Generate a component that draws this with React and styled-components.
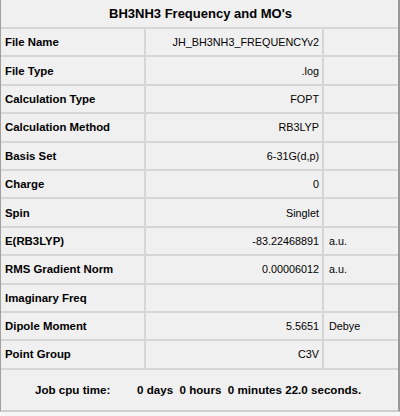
import React from 'react'
import styled, { createGlobalStyle } from 'styled-components'

const GlobalStyle = createGlobalStyle`
  html, body {
    margin: 0;
    padding: 0;
    background: #f6f6f6;
  }
  body {
    font-family: "Liberation Sans", Arial, sans-serif;
    font-size: 11px;
    color: #000;
  }
`

const Panel = styled.div`
  width: 400px;
  box-sizing: border-box;
  background: #f0f0f0;
  border-left: 1px solid #a0a0a0;
  border-right: 2px solid #979797;
  border-bottom: 2px solid #cfcfcf;
`

const Header = styled.div`
  height: 27px;
  display: flex;
  align-items: center;
  justify-content: center;
  font-weight: bold;
  font-size: 13px;
  padding-left: 2px;
`

const Row = styled.div`
  display: grid;
  grid-template-columns: 145px 178px 1fr;
  height: 28.4px;
  box-sizing: border-box;
  border-top: 2px solid #d6d6d6;
`

const Cell = styled.div`
  display: flex;
  align-items: center;
  box-sizing: border-box;
  border-right: ${p => (p.last ? 'none' : '2px solid #d6d6d6')};
  justify-content: ${p => (p.right ? 'flex-end' : 'flex-start')};
  padding: ${p => (p.right ? '0 3px 0 0' : p.unit ? '0 0 0 5px' : '0 0 0 4px')};
  font-weight: ${p => (p.bold ? 'bold' : 'normal')};
  font-size: ${p => (p.bold ? '11.4px' : '10.8px')};
  white-space: nowrap;
`

const JobRow = styled.div`
  height: 40px;
  border-top: 2px solid #d6d6d6;
  display: flex;
  align-items: center;
  font-weight: bold;
  font-size: 11.6px;
  padding-left: 34px;
  white-space: pre;
`

const JobLabel = styled.span`
  width: 102px;
`

const rows = [
  ['File Name', 'JH_BH3NH3_FREQUENCYv2', ''],
  ['File Type', '.log', ''],
  ['Calculation Type', 'FOPT', ''],
  ['Calculation Method', 'RB3LYP', ''],
  ['Basis Set', '6-31G(d,p)', ''],
  ['Charge', '0', ''],
  ['Spin', 'Singlet', ''],
  ['E(RB3LYP)', '-83.22468891', 'a.u.'],
  ['RMS Gradient Norm', '0.00006012', 'a.u.'],
  ['Imaginary Freq', '', ''],
  ['Dipole Moment', '5.5651', 'Debye'],
  ['Point Group', 'C3V', ''],
]

export default function App() {
  return (
    <>
      <GlobalStyle />
      <Panel>
        <Header>BH3NH3 Frequency and MO's</Header>
        {rows.map(([label, value, unit]) => (
          <Row key={label}>
            <Cell bold>{label}</Cell>
            <Cell right>{value}</Cell>
            <Cell unit last>{unit}</Cell>
          </Row>
        ))}
        <JobRow>
          <JobLabel>Job cpu time:</JobLabel>
          <span>0 days  0 hours  0 minutes 22.0 seconds.</span>
        </JobRow>
      </Panel>
    </>
  )
}
